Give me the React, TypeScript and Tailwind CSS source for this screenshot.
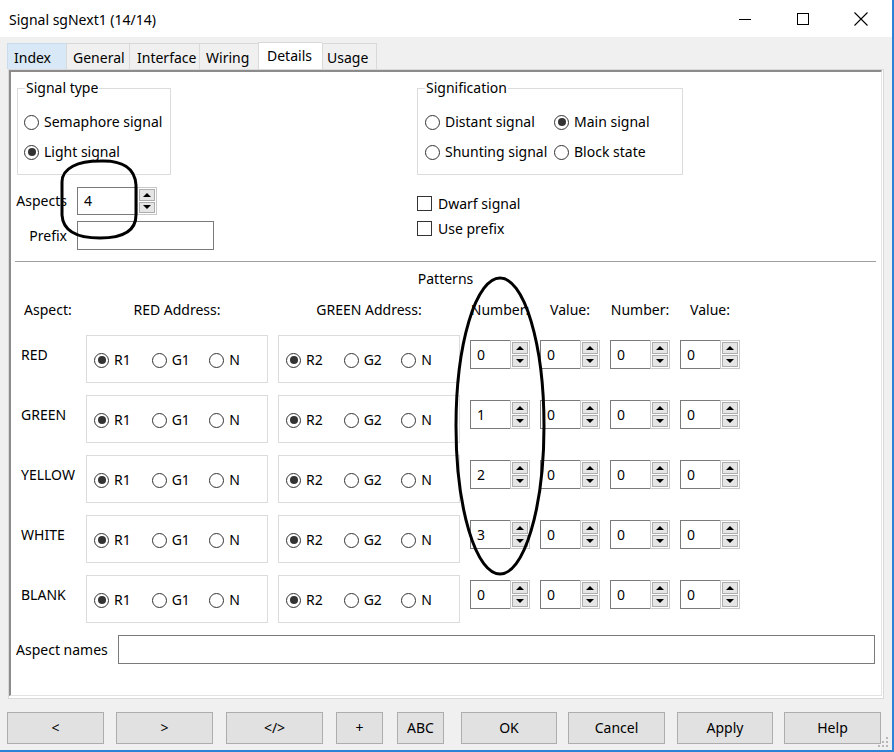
import React from 'react';

const Radio = ({ checked = false }: { checked?: boolean }) => (
  <span className="w-[15px] h-[15px] rounded-full border border-[#333333] bg-white flex items-center justify-center shrink-0">
    {checked && <span className="w-[8px] h-[8px] rounded-full bg-[#333333]" />}
  </span>
);

const RadioLabel = ({ checked = false, label, className = '' }: { checked?: boolean; label: string; className?: string }) => (
  <div className={'flex items-center ' + className}>
    <Radio checked={checked} />
    <span className="ml-[5px] whitespace-nowrap">{label}</span>
  </div>
);

const Check = ({ label }: { label: string }) => (
  <div className="flex items-center h-[25px]">
    <span className="w-[15px] h-[15px] border border-[#333333] bg-white shrink-0" />
    <span className="ml-[6px]">{label}</span>
  </div>
);

const Up = () => <span className="w-0 h-0 border-x-[4px] border-x-transparent border-b-[4px] border-b-black" />;
const Down = () => <span className="w-0 h-0 border-x-[4px] border-x-transparent border-t-[4px] border-t-black" />;

const SpinButtons = () => (
  <div className="w-[20px] h-full border border-[#c8c8c8] bg-white p-[1px] flex flex-col gap-[1px]">
    <div className="flex-1 bg-[#e5e5e5] border border-[#adadad] flex items-center justify-center"><Up /></div>
    <div className="flex-1 bg-[#e5e5e5] border border-[#adadad] flex items-center justify-center"><Down /></div>
  </div>
);

const Spinner = ({ value }: { value: string }) => (
  <div className="flex h-[29px] w-[60px]">
    <div className="w-[40px] h-full border border-r-0 border-[#7a7a7a] bg-white pl-[6px] leading-[27px]">{value}</div>
    <SpinButtons />
  </div>
);

const Group = ({ title, className, children }: { title: string; className: string; children: React.ReactNode }) => (
  <div className={'relative border border-[#dcdcdc] h-[87px] ' + className}>
    <span className="absolute top-[-11px] bg-white px-[1px] leading-[20px] left-[7px]">{title}</span>
    {children}
  </div>
);

const rows = [
  { name: 'RED', num: '0' },
  { name: 'GREEN', num: '1' },
  { name: 'YELLOW', num: '2' },
  { name: 'WHITE', num: '3' },
  { name: 'BLANK', num: '0' },
];

const tabs = [
  { t: 'Index', w: 'w-[59px] bg-[#d9e8f6] border-[#c8dcee] h-[26px] pl-[6px] pt-[4px]' },
  { t: 'General', w: 'w-[63px] bg-[#f0f0f0] border-[#d9d9d9] h-[26px] pl-[6px] pt-[4px]' },
  { t: 'Interface', w: 'w-[70px] bg-[#f0f0f0] border-[#d9d9d9] h-[26px] pl-[7px] pt-[4px]' },
  { t: 'Wiring', w: 'w-[59px] bg-[#f0f0f0] border-[#d9d9d9] h-[26px] pl-[6px] pt-[4px]' },
  { t: 'Details', w: 'w-[64px] bg-white border-[#d9d9d9] h-[27px] pl-[8px] pt-[3px]' },
  { t: 'Usage', w: 'w-[55px] bg-[#f0f0f0] border-[#d9d9d9] h-[26px] pl-[4px] pt-[4px] border-r' },
];

const buttons = [
  { t: '<', c: 'w-[97px]' },
  { t: '>', c: 'w-[97px] ml-[12px]' },
  { t: '</>', c: 'w-[97px] ml-[13px]' },
  { t: '+', c: 'w-[47px] ml-[13px]' },
  { t: 'ABC', c: 'w-[47px] ml-[14px]' },
  { t: 'OK', c: 'w-[96px] ml-[17px]' },
  { t: 'Cancel', c: 'w-[97px] ml-[11px]' },
  { t: 'Apply', c: 'w-[96px] ml-[12px]' },
  { t: 'Help', c: 'w-[97px] ml-[11px]' },
];

export default function App() {
  return (
    <div className="relative w-[894px] h-[752px] bg-[#f0f0f0] border-r-2 border-b-2 border-[#2b82d6] overflow-hidden font-['Noto_Sans',sans-serif] text-[14px] leading-[20px] text-black">
      {/* Title bar */}
      <div className="h-[37px] bg-white flex items-center">
        <span className="ml-[9px] pt-[3px] text-[14px]">Signal sgNext1 (14/14)</span>
        <div className="ml-auto mr-[2px] flex h-full">
          <div className="w-[58px] h-full flex items-center justify-center">
            <svg width="12" height="12" viewBox="0 0 12 12"><path d="M0 6.5 H12" stroke="#000" strokeWidth="1" /></svg>
          </div>
          <div className="w-[58px] h-full flex items-center justify-center">
            <svg width="12" height="12" viewBox="0 0 12 12"><rect x="0.5" y="0.5" width="11" height="11" fill="none" stroke="#000" strokeWidth="1" /></svg>
          </div>
          <div className="w-[58px] h-full flex items-center justify-center">
            <svg width="14" height="14" viewBox="0 0 14 14"><path d="M0.5 0.5 L13.5 13.5 M13.5 0.5 L0.5 13.5" stroke="#000" strokeWidth="1.1" /></svg>
          </div>
        </div>
      </div>

      {/* Tabs */}
      <div className="mt-[5px] h-[27px] ml-[7px] flex items-end">
        {tabs.map((tab) => (
          <div key={tab.t} className={'border-t border-l ' + tab.w}>{tab.t}</div>
        ))}
      </div>

      {/* Panel */}
      <div className="ml-[8px] w-[876px] h-[630px] border border-[#d9d9d9] bg-white">
        <div className="h-[626px] mr-[1px] border-l-2 border-t-2 border-l-[#8c8c8c] border-t-[#8c8c8c] border-r border-b border-r-[#e3e3e3] border-b-[#e3e3e3] bg-white">
          {/* Section A */}
          <div className="flex mt-[16px]">
            <div className="ml-[5px] w-[401px] flex flex-col">
              <Group title="Signal type" className="ml-[1px] w-[154px] pt-[18px] pl-[6px]">
                <RadioLabel label="Semaphore signal" className="h-[30px]" />
                <RadioLabel label="Light signal" checked className="h-[30px]" />
              </Group>
              <div className="mt-[12px] flex items-center h-[28px]">
                <span className="w-[51px] text-right">Aspects</span>
                <div className="ml-[10px] flex h-[28px]">
                  <div className="w-[60px] h-full border border-r-0 border-[#7a7a7a] bg-white pl-[6px] leading-[26px]">4</div>
                  <SpinButtons />
                </div>
              </div>
              <div className="mt-[6px] flex items-center h-[29px]">
                <span className="w-[51px] text-right">Prefix</span>
                <div className="ml-[10px] w-[137px] h-full border border-[#7a7a7a] bg-white" />
              </div>
            </div>
            <div className="flex flex-col">
              <Group title="Signification" className="w-[266px] pt-[18px] pl-[7px]">
                <div className="flex h-[30px]">
                  <RadioLabel label="Distant signal" className="w-[129px]" />
                  <RadioLabel label="Main signal" checked />
                </div>
                <div className="flex h-[30px]">
                  <RadioLabel label="Shunting signal" className="w-[129px]" />
                  <RadioLabel label="Block state" />
                </div>
              </Group>
              <div className="mt-[16px]">
                <Check label="Dwarf signal" />
                <Check label="Use prefix" />
              </div>
            </div>
          </div>

          {/* Separator */}
          <div className="mt-[11px] ml-[4px] w-[861px] h-px bg-[#a0a0a0]" />
          <div className="mt-[7px] ml-[4px] w-[861px] text-center">Patterns</div>

          {/* Header */}
          <div className="mt-[11px] pl-[10px] flex h-[20px]">
            <span className="w-[65px] pl-[3px]">Aspect:</span>
            <span className="w-[182px] text-center">RED Address:</span>
            <span className="ml-[10px] w-[182px] text-center">GREEN Address:</span>
            <span className="ml-[10px] w-[60px] text-center">Number:</span>
            <span className="ml-[10px] w-[60px] text-center">Value:</span>
            <span className="ml-[10px] w-[60px] text-center">Number:</span>
            <span className="ml-[10px] w-[60px] text-center">Value:</span>
          </div>

          {/* Rows */}
          <div className="mt-[15px] flex flex-col gap-[12px]">
            {rows.map((r) => (
              <div key={r.name} className="pl-[10px] flex items-start h-[48px]">
                <span className="w-[65px] pt-[10px]">{r.name}</span>
                <div className="w-[182px] h-[48px] border border-[#dcdcdc] pl-[7px] pt-[14px] flex">
                  <RadioLabel label="R1" checked className="w-[58px] h-[20px]" />
                  <RadioLabel label="G1" className="w-[58px] h-[20px]" />
                  <RadioLabel label="N" className="w-[58px] h-[20px]" />
                </div>
                <div className="ml-[10px] w-[182px] h-[48px] border border-[#dcdcdc] pl-[7px] pt-[14px] flex">
                  <RadioLabel label="R2" checked className="w-[58px] h-[20px]" />
                  <RadioLabel label="G2" className="w-[58px] h-[20px]" />
                  <RadioLabel label="N" className="w-[58px] h-[20px]" />
                </div>
                <div className="ml-[10px] mt-[5px]"><Spinner value={r.num} /></div>
                <div className="ml-[10px] mt-[5px]"><Spinner value="0" /></div>
                <div className="ml-[10px] mt-[5px]"><Spinner value="0" /></div>
                <div className="ml-[10px] mt-[5px]"><Spinner value="0" /></div>
              </div>
            ))}
          </div>

          {/* Aspect names */}
          <div className="mt-[12px] ml-[5px] flex items-center h-[29px]">
            <span className="w-[102px]">Aspect names</span>
            <div className="w-[757px] h-full border border-[#7a7a7a] bg-white" />
          </div>
        </div>
      </div>

      {/* Bottom buttons */}
      <div className="mt-[13px] pl-[7px] flex h-[32px]">
        {buttons.map((b) => (
          <div key={b.t} className={'h-full bg-[#e1e1e1] border border-[#adadad] flex items-center justify-center ' + b.c}>{b.t}</div>
        ))}
      </div>

      {/* Resize grip */}
      <svg className="absolute left-[878px] top-[737px] pointer-events-none" width="12" height="12" viewBox="0 0 12 12">
        <rect x="8" y="0" width="2" height="2" fill="#b8b8b8" />
        <rect x="4" y="4" width="2" height="2" fill="#b8b8b8" />
        <rect x="8" y="4" width="2" height="2" fill="#b8b8b8" />
        <rect x="0" y="8" width="2" height="2" fill="#b8b8b8" />
        <rect x="4" y="8" width="2" height="2" fill="#b8b8b8" />
        <rect x="8" y="8" width="2" height="2" fill="#b8b8b8" />
      </svg>

      {/* Annotation ovals */}
      <svg className="absolute left-0 top-0 pointer-events-none" width="894" height="752" viewBox="0 0 894 752">
        <path d="M100 161 C122 160 135 168 136 185 L136 215 C136 232 122 238 100 238 C78 238 63 232 62 215 L62 182 C62 168 78 161 100 161 Z" fill="none" stroke="#000" strokeWidth="3" />
        <ellipse cx="500" cy="426" rx="44" ry="148" fill="none" stroke="#000" strokeWidth="3" />
      </svg>
    </div>
  );
}
